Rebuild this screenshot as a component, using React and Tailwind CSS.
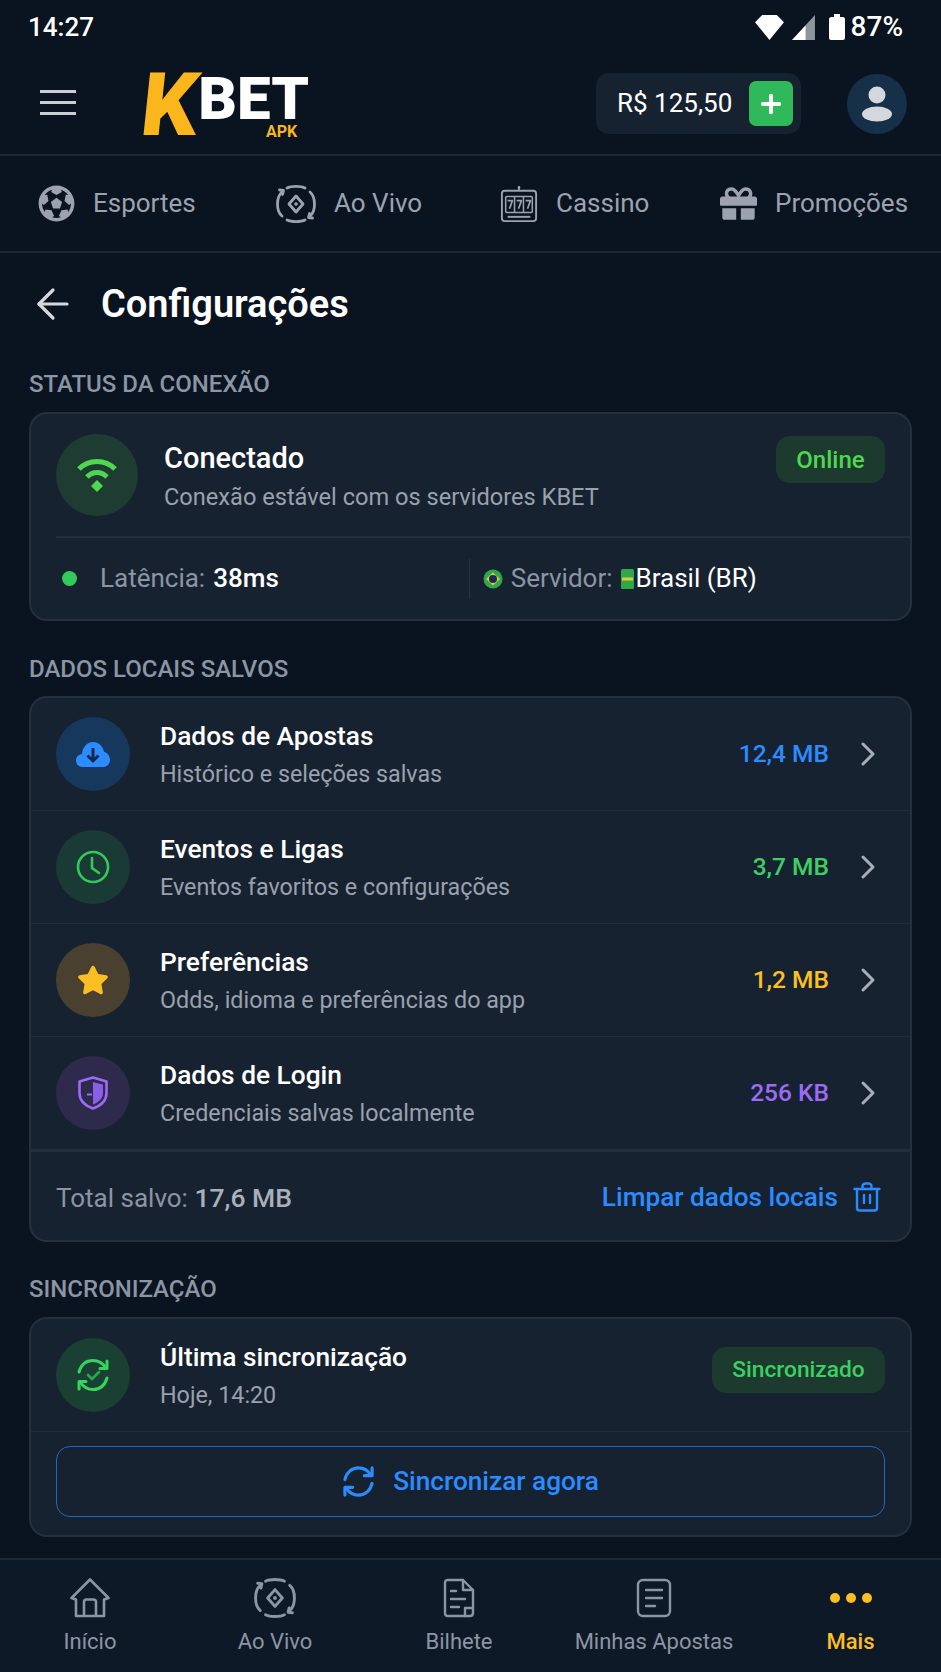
import { ChevronRight, ArrowLeft, Plus } from "lucide-react";
import { FaFutbol, FaGift, FaStar } from "react-icons/fa";

// Ao Vivo camera-like ring
const LiveIcon = ({ className }) => (
    <svg viewBox="0 0 40 40" fill="none" stroke="currentColor" strokeWidth="2.8" strokeLinecap="round" strokeLinejoin="round" className={className}>
        <path d="M11 4C15 1.8 25 1.8 29 4" />
        <path d="M11 36C15 38.2 25 38.2 29 36" />
        <path d="M6 8C0 13 0 27 6 32" />
        <path d="M34 8C40 13 40 27 34 32" />
        <path d="M3.5 6L7.5 6.5L6.5 10.5" />
        <path d="M36.5 34L32.5 33.5L33.5 29.5" />
        <path d="M20 12L27 20L20 28L13 20Z" />
        <circle cx="20" cy="20" r="1.8" fill="currentColor" stroke="none" />
    </svg>
);

const SlotIcon = ({ className }) => (
    <svg viewBox="0 0 40 40" fill="none" stroke="currentColor" strokeWidth="2" strokeLinejoin="round" className={className}>
        <path d="M20 1.5V6" />
        <circle cx="20" cy="2.5" r="1.4" fill="currentColor" stroke="none" />
        <rect x="2" y="6" width="36" height="32" rx="3" />
        <rect x="6" y="12" width="28" height="17" rx="1" strokeWidth="1.6" />
        <path d="M15.3 12V29M24.7 12V29" strokeWidth="1.6" />
        <path d="M8 16.5H13L10 25M17.5 16.5H22.5L19.5 25M27 16.5H32L29 25" strokeWidth="1.8" />
        <path d="M8 33.5H32" strokeWidth="2" />
    </svg>
);

const HomeIcon = ({ className }) => (
    <svg viewBox="0 0 40 40" fill="none" stroke="currentColor" strokeWidth="2.6" strokeLinejoin="round" className={className}>
        <path d="M1.5 20L20 1.5L38.5 20L34 21.5V38H6V21.5Z" />
        <path d="M14 38V24C14 22.5 15 21.5 16.5 21.5H23.5C25 21.5 26 22.5 26 24V38" />
    </svg>
);

const TicketIcon = ({ className }) => (
    <svg viewBox="0 0 32 40" fill="none" stroke="currentColor" strokeWidth="2.4" strokeLinejoin="round" strokeLinecap="round" className={className}>
        <path d="M5 2H20L30 12V35C30 36.5 29 38 27 38H5C3 38 2 36.5 2 35V5C2 3 3 2 5 2Z" />
        <path d="M20 2V12H30" />
        <path d="M8 13H13M8 21H22M8 29H16" />
        <path d="M22 38V30H30" />
    </svg>
);

const ListDocIcon = ({ className }) => (
    <svg viewBox="0 0 36 40" fill="none" stroke="currentColor" strokeWidth="2.4" strokeLinecap="round" className={className}>
        <rect x="2" y="2" width="32" height="36" rx="5" />
        <path d="M10 12H26M10 20H26M10 28H19" />
    </svg>
);

const WifiBadge = () => (
    <svg viewBox="0 0 42 36" className="w-[42px] h-[36px]" fill="none" stroke="#4fd84f" strokeWidth="5">
        <path d="M3 12C13 2 29 2 39 12" />
        <path d="M11 20C17 14 25 14 31 20" />
        <path d="M21 23L27 29L21 35L15 29Z" fill="#4fd84f" stroke="none" />
    </svg>
);

const CloudIcon = () => (
    <svg viewBox="0 0 36 28" className="w-[36px] h-[28px]">
        <path d="M8 27C3.5 27 1 24 1 20.5C1 17 3.5 14.5 7 14C7.5 7 12 2 18 2C24 2 28 6.5 29 12C32.5 12.5 35 16 35 20C35 24 32 27 28 27Z" fill="#2b8cff" />
        <path d="M18 8V20M12.5 15.5L18 21L23.5 15.5" fill="none" stroke="#12294a" strokeWidth="3" />
    </svg>
);

const ClockIcon = () => (
    <svg viewBox="0 0 34 34" className="w-[34px] h-[34px]" fill="none" stroke="#35c95c" strokeWidth="2.6" strokeLinecap="round">
        <circle cx="17" cy="17" r="15" />
        <path d="M16 8V18L23 23" />
    </svg>
);

const ShieldIcon = () => (
    <svg viewBox="0 0 30 34" className="w-[30px] h-[34px]">
        <path d="M15 1.5L28.5 5.5V17C28.5 25 22 30 15 32.5C8 30 1.5 25 1.5 17V5.5Z" fill="none" stroke="#9a6cf5" strokeWidth="2.6" strokeLinejoin="round" />
        <path d="M15 6L25 8.5V17C25 23 20 26.5 15 28.5Z" fill="#8a5ee8" />
        <path d="M9 18.5H14" stroke="#9a6cf5" strokeWidth="2" />
    </svg>
);

const SyncCheckIcon = () => (
    <svg viewBox="0 0 36 36" className="w-[36px] h-[36px]" fill="none" stroke="#35d45e" strokeWidth="3" strokeLinecap="round" strokeLinejoin="round">
        <path d="M4 15C6 8 11 3.5 18 3.5C24 3.5 28 6.5 31 11" />
        <path d="M32 21C30 28 25 32.5 18 32.5C12 32.5 8 29.5 5 25" />
        <path d="M32 4V11.5H25" />
        <path d="M4 32V24.5H11" />
        <path d="M13 18L17 22L24 15" stroke="#2aa84c" strokeWidth="2.6" />
    </svg>
);

const SyncIcon = () => (
    <svg viewBox="0 0 34 34" className="w-[33px] h-[33px]" fill="none" stroke="#2b8cff" strokeWidth="3.2" strokeLinecap="round" strokeLinejoin="round">
        <path d="M3 15C4.5 8 10 3 17 3C22.5 3 26.5 5.5 29.5 10" />
        <path d="M31 19C29.5 26 24 31 17 31C11.5 31 7.5 28.5 4.5 24" />
        <path d="M31 3V11H23" />
        <path d="M3 31V23H11" />
    </svg>
);

const TrashIcon = () => (
    <svg viewBox="0 0 28 30" className="w-[28px] h-[30px]" fill="none" stroke="#2b8cff" strokeWidth="2.4" strokeLinecap="round" strokeLinejoin="round">
        <path d="M1.5 7H26.5" />
        <path d="M9.5 7V4C9.5 2.5 11 1.5 12.5 1.5H15.5C17 1.5 18.5 2.5 18.5 4V7" />
        <path d="M4 7V26C4 27.5 5 28.5 6.5 28.5H21.5C23 28.5 24 27.5 24 26V7" />
        <path d="M11 13V21M17 13V21" />
    </svg>
);

const dataRows = [
    { title: "Dados de Apostas", sub: "Histórico e seleções salvas", value: "12,4 MB", color: "text-[#2b8cff]", circle: "bg-[#16385c]", icon: <CloudIcon /> },
    { title: "Eventos e Ligas", sub: "Eventos favoritos e configurações", value: "3,7 MB", color: "text-[#3ecf63]", circle: "bg-[#1a3b35]", icon: <ClockIcon /> },
    { title: "Preferências", sub: "Odds, idioma e preferências do app", value: "1,2 MB", color: "text-[#fbbf24]", circle: "bg-[#4a4030]", icon: <FaStar className="text-[#fbbf24] text-[32px]" /> },
    { title: "Dados de Login", sub: "Credenciais salvas localmente", value: "256 KB", color: "text-[#9a6cf5]", circle: "bg-[#2e2a4c]", icon: <ShieldIcon /> },
];

const topNav = [
    { label: "Esportes", icon: <FaFutbol className="text-[37px]" /> },
    { label: "Ao Vivo", icon: <LiveIcon className="w-[40px] h-[40px]" /> },
    { label: "Cassino", icon: <SlotIcon className="w-[38px] h-[38px]" /> },
    { label: "Promoções", icon: <FaGift className="text-[37px]" /> },
];

const bottomNav = [
    { label: "Início", icon: <HomeIcon className="w-[40px] h-[40px] text-[#8b95a3]" /> },
    { label: "Ao Vivo", icon: <LiveIcon className="w-[42px] h-[42px] text-[#8b95a3]" /> },
    { label: "Bilhete", icon: <TicketIcon className="w-[32px] h-[40px] text-[#8b95a3]" /> },
    { label: "Minhas Apostas", icon: <ListDocIcon className="w-[36px] h-[40px] text-[#8b95a3]" /> },
    {
        label: "Mais",
        active: true,
        icon: (
            <div className="flex gap-[6px]">
                <span className="w-[10px] h-[10px] rounded-full bg-[#fbbf24]" />
                <span className="w-[10px] h-[10px] rounded-full bg-[#fbbf24]" />
                <span className="w-[10px] h-[10px] rounded-full bg-[#fbbf24]" />
            </div>
        ),
    },
];

const SectionLabel = ({ children, className }) => (
    <div className={`px-[29px] text-[24px] leading-[28px] font-medium text-[#8b95a3] ${className}`}>{children}</div>
);

export default function App() {
    return (
        <div className="w-[941px] h-[1672px] overflow-hidden flex flex-col bg-[#0a1320] text-white [font-family:Roboto,sans-serif]">
            {/* Status bar */}
            <div className="h-[53px] shrink-0 flex items-center justify-between pl-[28px] pr-[38px] pt-[1px]">
                <span className="text-[26px] font-medium leading-none">14:27</span>
                <div className="flex items-center gap-[6px]">
                    <svg viewBox="0 0 30 26" className="w-[31px] h-[27px]"><path d="M1 8L8 1H22L29 8L15 25Z" fill="#fff" /></svg>
                    <svg viewBox="0 0 24 26" className="w-[25px] h-[27px]">
                        <path d="M1 25L23 1V25Z" fill="#8f959c" />
                        <path d="M1 25L14 11V25Z" fill="#fff" />
                    </svg>
                    <svg viewBox="0 0 16 26" className="w-[16px] h-[26px] ml-[7px]">
                        <path d="M5 0H11V3H14C15 3 16 4 16 5V24C16 25 15 26 14 26H2C1 26 0 25 0 24V5C0 4 1 3 2 3H5Z" fill="#fff" />
                    </svg>
                    <span className="text-[28px] font-medium leading-none">87%</span>
                </div>
            </div>

            {/* Header */}
            <div className="h-[103px] shrink-0 flex items-center pl-[40px] pr-[34px] border-b-2 border-[#1d2836]">
                <div className="flex flex-col gap-[8px] w-[36px] mb-[2px]">
                    <span className="h-[3px] bg-[#c9ced4]" />
                    <span className="h-[3px] bg-[#c9ced4]" />
                    <span className="h-[3px] bg-[#c9ced4]" />
                </div>
                <div className="relative ml-[66px] flex items-end h-[66px] font-black">
                    <span className="text-[88px] leading-[64px] text-[#fbb61c] [transform:skewX(-6deg)]">K</span>
                    <span className="text-[60px] leading-[44px] text-white mb-[16px]">BET</span>
                    <span className="absolute left-[124px] top-[53px] text-[16px] leading-[16px] font-bold text-[#fbb61c]">APK</span>
                </div>
                <div className="ml-auto h-[61px] w-[205px] rounded-[13px] bg-[#162230] flex items-center justify-between pl-[21px] pr-[8px]">
                    <span className="text-[26px] font-normal">R$ 125,50</span>
                    <div className="w-[44px] h-[45px] rounded-[7px] bg-[#30b95b] flex items-center justify-center">
                        <Plus strokeWidth={3.4} className="w-[28px] h-[28px] text-white" />
                    </div>
                </div>
                <div className="ml-[46px] w-[60px] h-[60px] rounded-full bg-[#17304a] flex items-center justify-center">
                    <svg viewBox="0 0 30 36" className="w-[30px] h-[36px]" fill="#d4d7db">
                        <ellipse cx="15" cy="9" rx="8.5" ry="8.5" />
                        <ellipse cx="15" cy="28" rx="15" ry="7.5" />
                    </svg>
                </div>
            </div>

            {/* Top nav */}
            <div className="h-[97px] shrink-0 grid grid-cols-[238px_224px_220px_1fr] items-center pl-[38px] border-b-2 border-[#1d2836] text-[#9ca3af]">
                {topNav.map((n) => (
                    <div key={n.label} className="flex items-center gap-[18px]">
                        {n.icon}
                        <span className="text-[26px] whitespace-nowrap">{n.label}</span>
                    </div>
                ))}
            </div>

            {/* Title */}
            <div className="h-[102px] shrink-0 flex items-center pl-[29px]">
                <ArrowLeft strokeWidth={1.6} className="w-[48px] h-[48px] text-[#d5d9de]" />
                <span className="ml-[24px] text-[38px] font-semibold">Configurações</span>
            </div>

            <SectionLabel className="mt-[15px]">STATUS DA CONEXÃO</SectionLabel>
            <div className="mx-[29px] mt-[14px] h-[209px] shrink-0 rounded-[18px] bg-[#172231] border-2 border-[#252f3d] flex flex-col">
                <div className="h-[124px] shrink-0 flex pr-[25px] pt-[20px] ml-[25px] border-b-2 border-[#232e3d]">
                    <div className="w-[82px] h-[82px] rounded-full bg-[#1e3c32] flex items-center justify-center">
                        <WifiBadge />
                    </div>
                    <div className="ml-[26px] flex-1">
                        <div className="text-[29px] leading-[36px] font-medium mt-[6px]">Conectado</div>
                        <div className="text-[23.6px] leading-[30px] text-[#99a1ad] mt-[6px]">Conexão estável com os servidores KBET</div>
                    </div>
                    <div className="h-[47px] w-[109px] mt-[2px] rounded-[14px] bg-[#1c3a2e] flex items-center justify-center text-[24px] font-medium text-[#4fd84f]">Online</div>
                </div>
                <div className="flex-1 flex items-center pl-[31px] text-[26px]">
                    <span className="w-[15px] h-[15px] rounded-full bg-[#35c95c]" />
                    <span className="ml-[23px] text-[#8b95a3]">Latência:</span>
                    <span className="ml-[8px] font-medium">38ms</span>
                    <span className="ml-[190px] h-[40px] w-[1px] bg-[#2a3442]" />
                    <svg viewBox="0 0 20 20" className="ml-[13px] w-[20px] h-[20px] shrink-0">
                        <circle cx="10" cy="10" r="9.5" fill="#2fa84a" />
                        <path d="M10 3.5L17 10L10 16.5L3 10Z" fill="#e2c93a" />
                        <circle cx="10" cy="10" r="4" fill="#1b2a5c" />
                    </svg>
                    <span className="ml-[8px] text-[#8b95a3]">Servidor:</span>
                    <svg viewBox="0 0 13 20" className="ml-[8px] w-[13px] h-[20px] shrink-0">
                        <rect width="13" height="20" rx="1.5" fill="#2fa84a" />
                        <path d="M1 10H12" stroke="#e2c93a" strokeWidth="3" />
                    </svg>
                    <span className="ml-[2px]">Brasil (BR)</span>
                </div>
            </div>

            <SectionLabel className="mt-[34px]">DADOS LOCAIS SALVOS</SectionLabel>
            <div className="mx-[29px] mt-[13px] h-[546px] shrink-0 rounded-[18px] bg-[#172231] border-2 border-[#252f3d] flex flex-col">
                {dataRows.map((r) => (
                    <div key={r.title} className="h-[113px] shrink-0 flex items-center pl-[25px] pr-[22px] border-b border-[#222d3b]">
                        <div className={`w-[74px] h-[74px] rounded-full flex items-center justify-center ${r.circle}`}>{r.icon}</div>
                        <div className="ml-[30px] flex-1">
                            <div className="text-[26.3px] leading-[34px] font-medium">{r.title}</div>
                            <div className="text-[23.3px] leading-[30px] text-[#99a1ad] mt-[6px]">{r.sub}</div>
                        </div>
                        <span className={`text-[24.5px] font-medium ${r.color}`}>{r.value}</span>
                        <ChevronRight strokeWidth={1.8} className="ml-[19px] w-[40px] h-[40px] text-[#a7aeb8]" />
                    </div>
                ))}
                <div className="flex-1 flex items-center justify-between pl-[25px] pr-[29px] pt-[3px] border-t-2 border-[#232e3d]">
                    <span className="text-[26px] text-[#8b95a3]">Total salvo: <span className="text-[26.5px] font-medium text-[#a9b0ba]">17,6 MB</span></span>
                    <div className="flex items-center gap-[15px]">
                        <span className="text-[26.2px] font-medium text-[#2b8cff]">Limpar dados locais</span>
                        <TrashIcon />
                    </div>
                </div>
            </div>

            <SectionLabel className="mt-[33px]">SINCRONIZAÇÃO</SectionLabel>
            <div className="mx-[29px] mt-[14px] h-[220px] shrink-0 rounded-[18px] bg-[#172231] border-2 border-[#252f3d] flex flex-col">
                <div className="h-[113px] shrink-0 flex items-center pl-[25px] pr-[25px] border-b border-[#222d3b]">
                    <div className="w-[74px] h-[74px] rounded-full bg-[#1a3f33] flex items-center justify-center"><SyncCheckIcon /></div>
                    <div className="ml-[30px] flex-1">
                        <div className="text-[26.3px] leading-[34px] font-medium">Última sincronização</div>
                        <div className="text-[23.3px] leading-[30px] text-[#99a1ad] mt-[6px]">Hoje, 14:20</div>
                    </div>
                    <div className="h-[46px] w-[173px] mb-[10px] rounded-[14px] bg-[#1c3a2e] flex items-center justify-center text-[22.7px] font-medium text-[#3ecf63]">Sincronizado</div>
                </div>
                <div className="mx-[25px] mt-[14px] h-[71px] rounded-[14px] border-[1.5px] border-[#2068c4] flex items-center justify-center gap-[18px]">
                    <SyncIcon />
                    <span className="text-[26.2px] font-medium text-[#2b8cff]">Sincronizar agora</span>
                </div>
            </div>

            {/* Bottom nav */}
            <div className="mt-auto h-[114px] shrink-0 bg-[#0e1927] border-t-2 border-[#1d2836] grid grid-cols-[180px_190px_178px_212px_181px] pt-[16px]">
                {bottomNav.map((n) => (
                    <div key={n.label} className="flex flex-col items-center">
                        <div className="h-[44px] flex items-center justify-center">{n.icon}</div>
                        <span className={`mt-[8px] text-[22px] leading-[28px] ${n.active ? "text-[#fbbf24] font-medium" : "text-[#8b95a3]"}`}>{n.label}</span>
                    </div>
                ))}
            </div>
        </div>
    );
}
